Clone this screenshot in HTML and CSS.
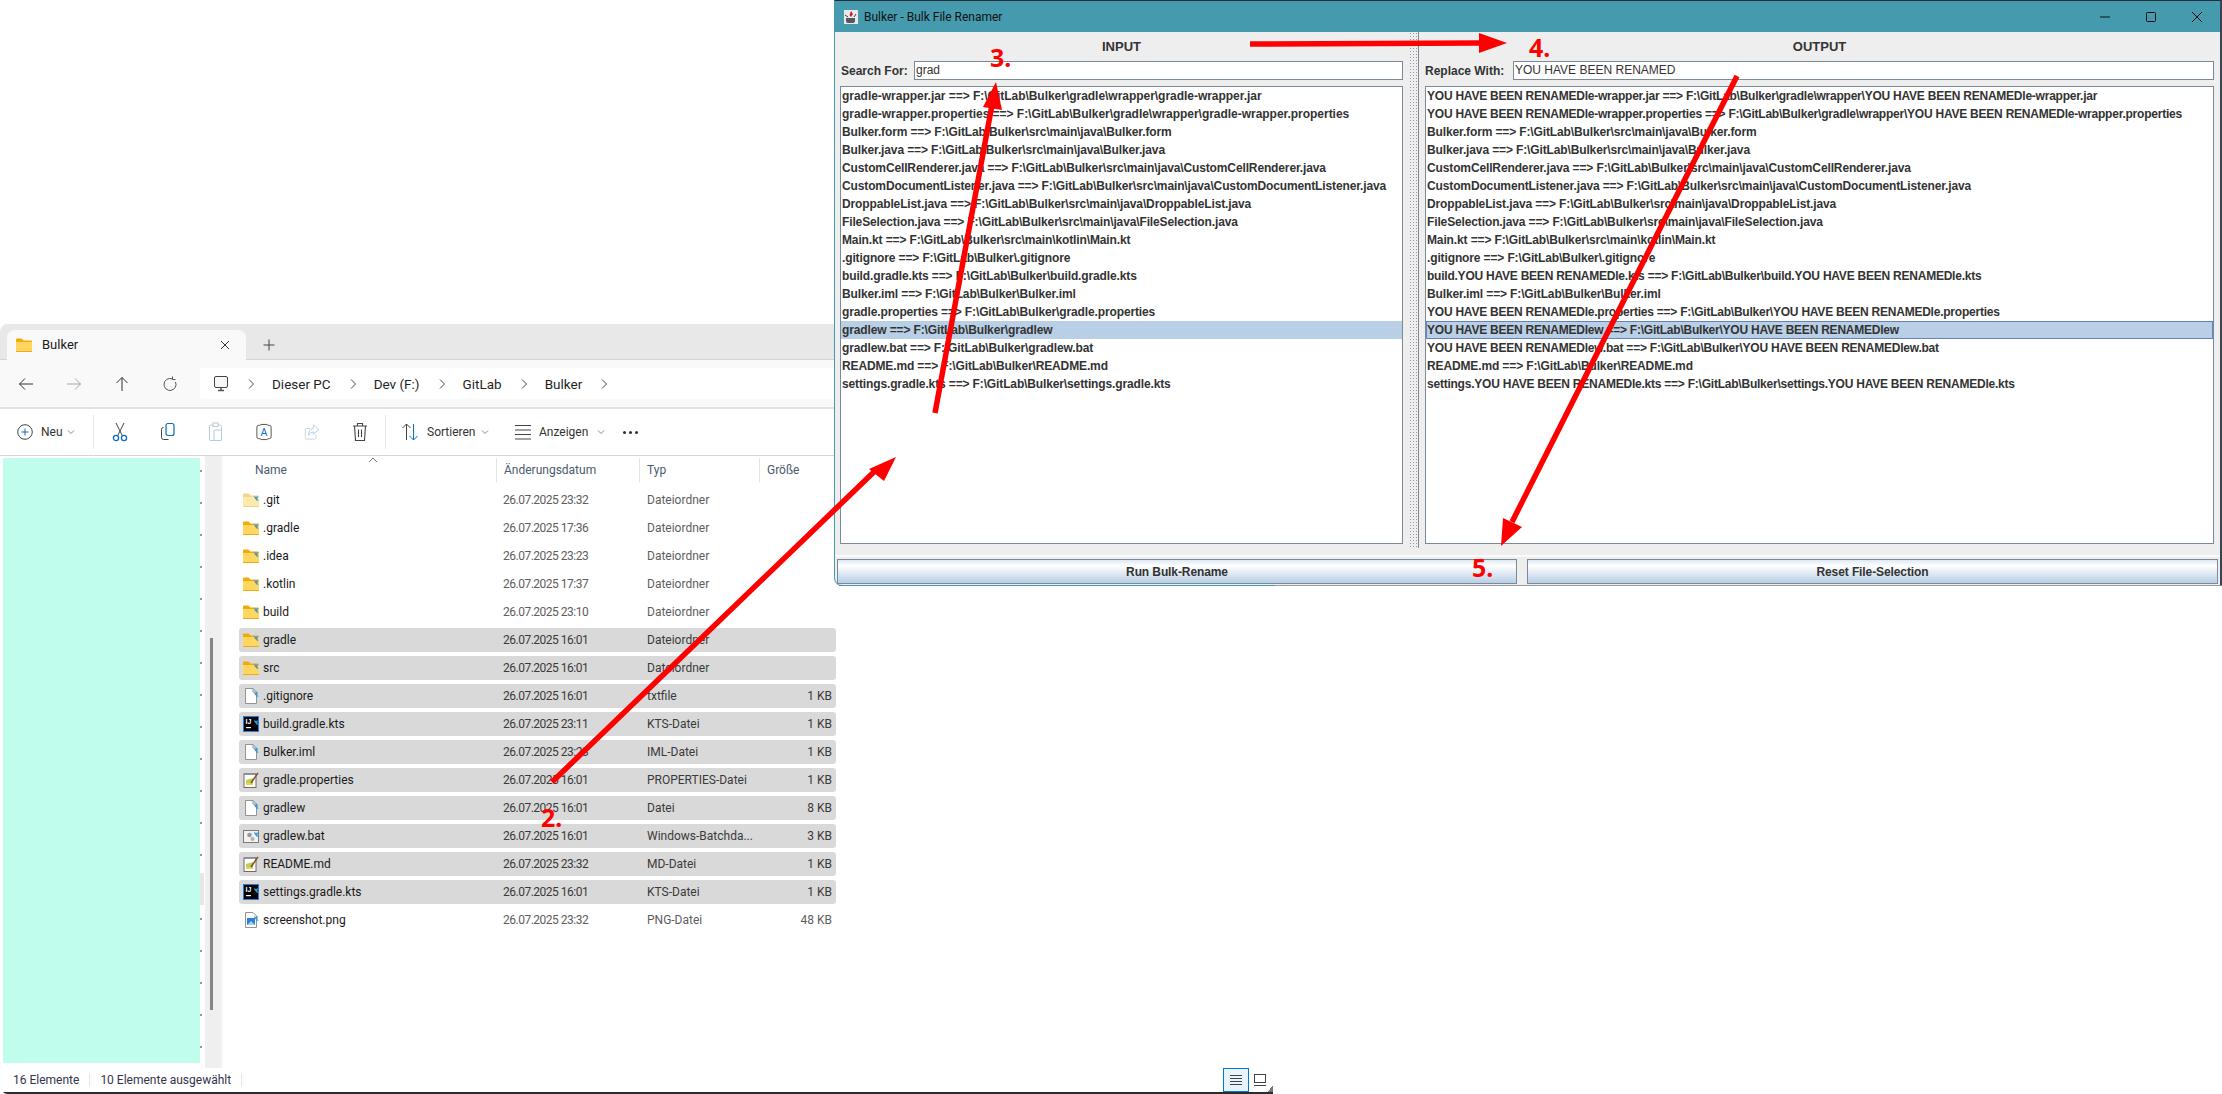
FILE: index.html
```html
<!DOCTYPE html>
<html lang="en">
<head>
    <meta charset="UTF-8">
    <title>Bulker</title>
    <link rel="stylesheet" href="styles.css">
</head>
<body>
    <svg class="defs" width="0" height="0">
        <symbol id="pin" viewBox="0 0 16 16"><path d="M11 .5l1.6 1.4L15 1.2 14.4 4l1.2 2-2-.6L11.500 3z" fill="#3a9ad9"/></symbol>
        <symbol id="folder" viewBox="0 0 16 16">
            <path d="M0 2.500Q0 1.500 1 1.500h4.500l2 2H15q1 0 1 1V6H0z" fill="#f2ac0a"/>
            <path d="M0 5h16v9q0 1-1 1H1q-1 0-1-1z" fill="#ffd75e"/>
            <path d="M0 14h16v.2q0 .8-1 .8H1q-1 0-1-.8z" fill="#eba91f"/>
        </symbol>
        <symbol id="page" viewBox="0 0 16 16"><path d="M2.500.5h7.500l3.500 3.500v11.500h-11z" fill="#fff" stroke="#8e9499"/><path d="M10 .5v3.500h3.500" fill="none" stroke="#8e9499"/></symbol>
        <symbol id="notes" viewBox="0 0 16 16">
            <rect x="1" y="2" width="12" height="13.500" fill="#fff" stroke="#6d6d6d"/>
            <path d="M2 1v2M4 1v2M6 1v2M8 1v2M10 1v2M12 1v2" stroke="#777"/>
            <path d="M3 8l7-2v7H3z" fill="#b6d455"/>
            <path d="M3 11h7v2H3z" fill="#f1d04a"/>
            <path d="M8 11L15 .8" stroke="#8a4a2a" stroke-width="1.500"/>
        </symbol>
        <symbol id="bat" viewBox="0 0 16 16">
            <rect x=".5" y="2.500" width="15" height="12" fill="#f2f2f2" stroke="#7c7c7c"/>
            <circle cx="6.500" cy="7" r="2.300" fill="#9a9a9a"/>
            <circle cx="9.500" cy="11" r="2" fill="#b2b2b2"/>
        </symbol>
        <symbol id="png" viewBox="0 0 16 16">
            <path d="M2.500.5h7.500l3.500 3.500v11.500h-11z" fill="#fff" stroke="#8e9499"/>
            <rect x="4" y="6" width="8" height="7" fill="#2d7fd4"/>
            <path d="M4 13l4-4 4 4z" fill="#9bd0f5"/>
        </symbol>
        <symbol id="chev-down" viewBox="0 0 8 8"><path d="M1 2.500l3 3 3-3" fill="none" stroke="#8a8a8a"/></symbol>
        <symbol id="crumb" viewBox="0 0 8 12"><path d="M2 1.500L6.500 6 2 10.500" fill="none" stroke="#444"/></symbol>
    </svg>

    <div class="explorer">
        <div class="tabstrip">
            <div class="tab">
                <svg class="ico"><use href="#folder"/></svg>
                <span class="tab-title">Bulker</span>
                <svg class="tab-x" viewBox="0 0 10 10"><path d="M1 1l8 8M9 1l-8 8" stroke="#333"/></svg>
            </div>
            <svg class="tab-plus" viewBox="0 0 12 12"><path d="M6 .5v11M.5 6h11" stroke="#444"/></svg>
        </div>

        <div class="navbar">
            <div class="nav-buttons">
                <svg viewBox="0 0 16 16"><path d="M15 8H1.500M7 2.500L1.500 8 7 13.500" fill="none" stroke="#333"/></svg>
                <svg viewBox="0 0 16 16"><path d="M1 8h13.500M9 2.500L14.500 8 9 13.500" fill="none" stroke="#a5a5a5"/></svg>
                <svg viewBox="0 0 16 16"><path d="M8 15V1.500M2.500 7L8 1.500 13.500 7" fill="none" stroke="#333"/></svg>
                <svg viewBox="0 0 16 16"><path d="M10 2.800A6 6 0 1 0 13.500 6M10.500 .5v3h3" fill="none" stroke="#555"/></svg>
            </div>
            <div class="addressbox">
                <svg class="pc" viewBox="0 0 16 16"><rect x="1.500" y=".5" width="13" height="11" rx="1.500" fill="#f4f8fb" stroke="#444"/><path d="M5 14.500h6M8 11.500v3" stroke="#555" stroke-width="1.500"/></svg>
                <svg class="crumb"><use href="#crumb"/></svg>
                <span class="crumb-text">Dieser PC</span>
                <svg class="crumb"><use href="#crumb"/></svg>
                <span class="crumb-text">Dev (F:)</span>
                <svg class="crumb"><use href="#crumb"/></svg>
                <span class="crumb-text">GitLab</span>
                <svg class="crumb"><use href="#crumb"/></svg>
                <span class="crumb-text">Bulker</span>
                <svg class="crumb"><use href="#crumb"/></svg>
            </div>
        </div>

        <div class="cmdbar">
            <div class="cmd cmd-new">
                <svg viewBox="0 0 16 16"><circle cx="8" cy="8" r="7.300" fill="none" stroke="#444"/><path d="M8 4.500v7M4.500 8h7" stroke="#0a6cbd"/></svg>
                <span>Neu</span>
                <svg class="cmd-chev"><use href="#chev-down"/></svg>
            </div>
            <div class="cmd-sep"></div>
            <div class="cmd-icons">
                <svg viewBox="0 0 16 20"><path d="M4 1l6.500 13M12 1L5.500 14" stroke="#444" fill="none"/><circle cx="4" cy="16" r="2.600" fill="none" stroke="#0a6cbd" stroke-width="1.300"/><circle cx="12" cy="16" r="2.600" fill="none" stroke="#0a6cbd" stroke-width="1.300"/></svg>
                <svg viewBox="0 0 16 20"><rect x="6" y="1.500" width="8" height="12" rx="2" fill="none" stroke="#0a6cbd" stroke-width="1.200"/><path d="M3.500 5.500Q1.500 5.500 1.500 7.500v8q0 2 2 2h5" fill="none" stroke="#444"/></svg>
                <svg viewBox="0 0 16 20"><rect x="1.500" y="3" width="12" height="15.500" rx="1.500" fill="none" stroke="#c2c8cc"/><rect x="5" y="1" width="5" height="3.500" fill="#fff" stroke="#c2c8cc"/><rect x="6" y="8" width="7.500" height="10.500" rx="1" fill="#fff" stroke="#a9cdea"/></svg>
                <svg viewBox="0 0 18 20"><path d="M5 2.500H3Q1 2.500 1 4.500v11q0 2 2 2h2M13 2.500h2q2 0 2 2v11q0 2-2 2h-2" fill="none" stroke="#444"/><text x="9" y="15" class="rename-a">A</text><path d="M5 1.500h8M5 18.500h8" stroke="#444"/></svg>
                <svg viewBox="0 0 18 20"><path d="M7 6H3q-1.500 0-1.500 1.500v9Q1.500 18 3 18h9q1.500 0 1.500-1.500V13" fill="none" stroke="#c9ced1"/><path d="M10.500 2L16.500 7.500 10.500 12.500V10Q6.500 10 5 14q0-7 5.500-8z" fill="none" stroke="#a9cdea"/></svg>
                <svg viewBox="0 0 16 20"><path d="M1 4h14M5.500 4V1.500h5V4M2.500 4l1 14.500h9L13.500 4M6.500 7.500v7.500M9.500 7.500v7.500" fill="none" stroke="#444" stroke-width="1.100"/></svg>
            </div>
            <div class="cmd-sep"></div>
            <div class="cmd cmd-sort">
                <svg viewBox="0 0 18 20"><path d="M5.500 18V2M1.500 6l4-4 4 4" fill="none" stroke="#444"/><path d="M12.500 2v16M8.500 14l4 4 4-4" fill="none" stroke="#0a6cbd"/></svg>
                <span>Sortieren</span>
                <svg class="cmd-chev"><use href="#chev-down"/></svg>
            </div>
            <div class="cmd cmd-view">
                <svg viewBox="0 0 16 16"><path d="M0 1.500h16M0 6h16M0 10.500h16M0 15h16" stroke="#444"/></svg>
                <span>Anzeigen</span>
                <svg class="cmd-chev"><use href="#chev-down"/></svg>
            </div>
            <div class="cmd-more"><i></i><i></i><i></i></div>
        </div>

        <div class="exp-body">
            <div class="sidebar">
                <div class="censor"></div>
                <div class="nav-peek"></div>
            </div>
            <div class="side-scroll"><div class="side-thumb"></div></div>
            <div class="filepane">
                <div class="colheads">
                    <span class="col-name">Name</span>
                    <span>Änderungsdatum</span>
                    <span>Typ</span>
                    <span>Größe</span>
                    <svg class="sort-caret" viewBox="0 0 10 6"><path d="M1 5l4-4 4 4" fill="none" stroke="#777"/></svg>
                </div>
                <div class="filerows">
                    <div class="frow"><div class="fname"><svg class="ico faded"><use href="#folder"/></svg><svg class="ico pin"><use href="#pin"/></svg>.git</div><span class="fcell fdate">26.07.2025 23:32</span><span class="fcell">Dateiordner</span><span class="fsize"></span></div>
                    <div class="frow"><div class="fname"><svg class="ico"><use href="#folder"/></svg><svg class="ico pin"><use href="#pin"/></svg>.gradle</div><span class="fcell fdate">26.07.2025 17:36</span><span class="fcell">Dateiordner</span><span class="fsize"></span></div>
                    <div class="frow"><div class="fname"><svg class="ico"><use href="#folder"/></svg><svg class="ico pin"><use href="#pin"/></svg>.idea</div><span class="fcell fdate">26.07.2025 23:23</span><span class="fcell">Dateiordner</span><span class="fsize"></span></div>
                    <div class="frow"><div class="fname"><svg class="ico"><use href="#folder"/></svg><svg class="ico pin"><use href="#pin"/></svg>.kotlin</div><span class="fcell fdate">26.07.2025 17:37</span><span class="fcell">Dateiordner</span><span class="fsize"></span></div>
                    <div class="frow"><div class="fname"><svg class="ico"><use href="#folder"/></svg><svg class="ico pin"><use href="#pin"/></svg>build</div><span class="fcell fdate">26.07.2025 23:10</span><span class="fcell">Dateiordner</span><span class="fsize"></span></div>
                    <div class="frow sel"><div class="fname"><svg class="ico"><use href="#folder"/></svg><svg class="ico pin"><use href="#pin"/></svg>gradle</div><span class="fcell fdate">26.07.2025 16:01</span><span class="fcell">Dateiordner</span><span class="fsize"></span></div>
                    <div class="frow sel"><div class="fname"><svg class="ico"><use href="#folder"/></svg><svg class="ico pin"><use href="#pin"/></svg>src</div><span class="fcell fdate">26.07.2025 16:01</span><span class="fcell">Dateiordner</span><span class="fsize"></span></div>
                    <div class="frow sel"><div class="fname"><svg class="ico"><use href="#page"/></svg><svg class="ico pin"><use href="#pin"/></svg>.gitignore</div><span class="fcell fdate">26.07.2025 16:01</span><span class="fcell">txtfile</span><span class="fsize">1 KB</span></div>
                    <div class="frow sel"><div class="fname"><svg class="ico" viewBox="0 0 16 16"><rect x=".5" y=".5" width="15" height="15" fill="#000" stroke="#1f7fe0"/><text x="2.500" y="8" class="ij-text">IJ</text><rect x="3" y="11" width="5" height="1.200" fill="#fff"/></svg><svg class="ico pin"><use href="#pin"/></svg>build.gradle.kts</div><span class="fcell fdate">26.07.2025 23:11</span><span class="fcell">KTS-Datei</span><span class="fsize">1 KB</span></div>
                    <div class="frow sel"><div class="fname"><svg class="ico"><use href="#page"/></svg><svg class="ico pin"><use href="#pin"/></svg>Bulker.iml</div><span class="fcell fdate">26.07.2025 23:23</span><span class="fcell">IML-Datei</span><span class="fsize">1 KB</span></div>
                    <div class="frow sel"><div class="fname"><svg class="ico"><use href="#notes"/></svg>gradle.properties</div><span class="fcell fdate">26.07.2025 16:01</span><span class="fcell">PROPERTIES-Datei</span><span class="fsize">1 KB</span></div>
                    <div class="frow sel"><div class="fname"><svg class="ico"><use href="#page"/></svg><svg class="ico pin"><use href="#pin"/></svg>gradlew</div><span class="fcell fdate">26.07.2025 16:01</span><span class="fcell">Datei</span><span class="fsize">8 KB</span></div>
                    <div class="frow sel"><div class="fname"><svg class="ico"><use href="#bat"/></svg><svg class="ico pin"><use href="#pin"/></svg>gradlew.bat</div><span class="fcell fdate">26.07.2025 16:01</span><span class="fcell">Windows-Batchda...</span><span class="fsize">3 KB</span></div>
                    <div class="frow sel"><div class="fname"><svg class="ico"><use href="#notes"/></svg>README.md</div><span class="fcell fdate">26.07.2025 23:32</span><span class="fcell">MD-Datei</span><span class="fsize">1 KB</span></div>
                    <div class="frow sel"><div class="fname"><svg class="ico" viewBox="0 0 16 16"><rect x=".5" y=".5" width="15" height="15" fill="#000" stroke="#1f7fe0"/><text x="2.500" y="8" class="ij-text">IJ</text><rect x="3" y="11" width="5" height="1.200" fill="#fff"/></svg><svg class="ico pin"><use href="#pin"/></svg>settings.gradle.kts</div><span class="fcell fdate">26.07.2025 16:01</span><span class="fcell">KTS-Datei</span><span class="fsize">1 KB</span></div>
                    <div class="frow"><div class="fname"><svg class="ico"><use href="#png"/></svg><svg class="ico pin"><use href="#pin"/></svg>screenshot.png</div><span class="fcell fdate">26.07.2025 23:32</span><span class="fcell">PNG-Datei</span><span class="fsize">48 KB</span></div>
                </div>
            </div>
        </div>

        <div class="statusbar">
            <span class="stat">16 Elemente</span>
            <span class="stat">10 Elemente ausgewählt</span>
            <div class="viewswitch">
                <div class="view-btn active"><svg viewBox="0 0 12 10"><path d="M0 .5h12M0 3.500h12M0 6.500h12M0 9.500h12" stroke="#444"/></svg></div>
                <div class="view-btn"><svg viewBox="0 0 12 12"><rect x=".5" y=".5" width="11" height="8" fill="none" stroke="#444"/><path d="M0 11.500h12" stroke="#444"/></svg></div>
            </div>
        </div>
    </div>

    <div class="javawin">
        <div class="titlebar">
            <svg class="java-ico" viewBox="0 0 16 16">
                <rect x="1" y="1" width="14" height="14" fill="#e9e9e9"/>
                <path d="M8 2l2 3-2 3-1.500-2z" fill="#c8242b"/>
                <path d="M3 9h9v3q0 2-2 2H5q-2 0-2-2zM1 14.500h13" fill="#55585c"/>
                <path d="M2 6l3 2M13 5l-2 3" stroke="#33414d"/>
            </svg>
            <span class="title-text">Bulker - Bulk File Renamer</span>
            <div class="wincontrols">
                <svg viewBox="0 0 12 12"><path d="M1 6h10" stroke="#111"/></svg>
                <svg viewBox="0 0 12 12"><rect x="1.500" y="1.500" width="9" height="9" rx="1" fill="none" stroke="#111"/></svg>
                <svg viewBox="0 0 12 12"><path d="M1 1l10 10M11 1L1 11" stroke="#111"/></svg>
            </div>
        </div>

        <div class="splitpane">
            <div class="pane pane-left">
                <h2 class="pane-title">INPUT</h2>
                <div class="field-row">
                    <label class="field-label label-search">Search For:</label>
                    <div class="field">grad</div>
                </div>
                <ul class="listbox">
                    <li class="loose">gradle-wrapper.jar ==&gt; F:\GitLab\Bulker\gradle\wrapper\gradle-wrapper.jar</li>
                    <li class="loose">gradle-wrapper.properties ==&gt; F:\GitLab\Bulker\gradle\wrapper\gradle-wrapper.properties</li>
                    <li>Bulker.form ==&gt; F:\GitLab\Bulker\src\main\java\Bulker.form</li>
                    <li>Bulker.java ==&gt; F:\GitLab\Bulker\src\main\java\Bulker.java</li>
                    <li>CustomCellRenderer.java ==&gt; F:\GitLab\Bulker\src\main\java\CustomCellRenderer.java</li>
                    <li>CustomDocumentListener.java ==&gt; F:\GitLab\Bulker\src\main\java\CustomDocumentListener.java</li>
                    <li>DroppableList.java ==&gt; F:\GitLab\Bulker\src\main\java\DroppableList.java</li>
                    <li>FileSelection.java ==&gt; F:\GitLab\Bulker\src\main\java\FileSelection.java</li>
                    <li>Main.kt ==&gt; F:\GitLab\Bulker\src\main\kotlin\Main.kt</li>
                    <li>.gitignore ==&gt; F:\GitLab\Bulker\.gitignore</li>
                    <li>build.gradle.kts ==&gt; F:\GitLab\Bulker\build.gradle.kts</li>
                    <li>Bulker.iml ==&gt; F:\GitLab\Bulker\Bulker.iml</li>
                    <li>gradle.properties ==&gt; F:\GitLab\Bulker\gradle.properties</li>
                    <li class="picked">gradlew ==&gt; F:\GitLab\Bulker\gradlew</li>
                    <li>gradlew.bat ==&gt; F:\GitLab\Bulker\gradlew.bat</li>
                    <li>README.md ==&gt; F:\GitLab\Bulker\README.md</li>
                    <li>settings.gradle.kts ==&gt; F:\GitLab\Bulker\settings.gradle.kts</li>
                </ul>
            </div>
            <div class="divider"></div>
            <div class="pane pane-right">
                <h2 class="pane-title">OUTPUT</h2>
                <div class="field-row">
                    <label class="field-label label-replace">Replace With:</label>
                    <div class="field">YOU HAVE BEEN RENAMED</div>
                </div>
                <ul class="listbox">
                    <li class="caps">YOU HAVE BEEN RENAMEDle-wrapper.jar ==&gt; F:\GitLab\Bulker\gradle\wrapper\YOU HAVE BEEN RENAMEDle-wrapper.jar</li>
                    <li class="caps">YOU HAVE BEEN RENAMEDle-wrapper.properties ==&gt; F:\GitLab\Bulker\gradle\wrapper\YOU HAVE BEEN RENAMEDle-wrapper.properties</li>
                    <li>Bulker.form ==&gt; F:\GitLab\Bulker\src\main\java\Bulker.form</li>
                    <li>Bulker.java ==&gt; F:\GitLab\Bulker\src\main\java\Bulker.java</li>
                    <li>CustomCellRenderer.java ==&gt; F:\GitLab\Bulker\src\main\java\CustomCellRenderer.java</li>
                    <li>CustomDocumentListener.java ==&gt; F:\GitLab\Bulker\src\main\java\CustomDocumentListener.java</li>
                    <li>DroppableList.java ==&gt; F:\GitLab\Bulker\src\main\java\DroppableList.java</li>
                    <li>FileSelection.java ==&gt; F:\GitLab\Bulker\src\main\java\FileSelection.java</li>
                    <li>Main.kt ==&gt; F:\GitLab\Bulker\src\main\kotlin\Main.kt</li>
                    <li>.gitignore ==&gt; F:\GitLab\Bulker\.gitignore</li>
                    <li class="caps">build.YOU HAVE BEEN RENAMEDle.kts ==&gt; F:\GitLab\Bulker\build.YOU HAVE BEEN RENAMEDle.kts</li>
                    <li>Bulker.iml ==&gt; F:\GitLab\Bulker\Bulker.iml</li>
                    <li class="caps">YOU HAVE BEEN RENAMEDle.properties ==&gt; F:\GitLab\Bulker\YOU HAVE BEEN RENAMEDle.properties</li>
                    <li class="caps picked focused">YOU HAVE BEEN RENAMEDlew ==&gt; F:\GitLab\Bulker\YOU HAVE BEEN RENAMEDlew</li>
                    <li class="caps">YOU HAVE BEEN RENAMEDlew.bat ==&gt; F:\GitLab\Bulker\YOU HAVE BEEN RENAMEDlew.bat</li>
                    <li>README.md ==&gt; F:\GitLab\Bulker\README.md</li>
                    <li class="caps">settings.YOU HAVE BEEN RENAMEDle.kts ==&gt; F:\GitLab\Bulker\settings.YOU HAVE BEEN RENAMEDle.kts</li>
                </ul>
            </div>
        </div>

        <div class="buttonbar">
            <button class="jbtn">Run Bulk-Rename</button>
            <button class="jbtn">Reset File-Selection</button>
        </div>
    </div>

    <!-- red annotations drawn on top of the screenshot -->
    <svg class="arrows" viewBox="0 0 2222 1094">
        <g stroke="#ff0000" stroke-width="5.500" fill="#ff0000">
            <line x1="552" y1="782" x2="878" y2="468"/>
            <line x1="935" y1="413" x2="992" y2="105"/>
            <line x1="1250" y1="44" x2="1480" y2="43"/>
            <line x1="1737" y1="76" x2="1512" y2="522"/>
        </g>
        <g fill="#ff0000">
            <polygon points="896,457 869,469 884,481"/>
            <polygon points="996,82 983,107 1002,110"/>
            <polygon points="1507,43 1479,33 1479,53"/>
            <polygon points="1501,546 1503,518 1522,527"/>
        </g>
    </svg>
    <span class="mark mark-2">2.</span>
    <span class="mark mark-3">3.</span>
    <span class="mark mark-4">4.</span>
    <span class="mark mark-5">5.</span>
</body>
</html>
```

FILE: styles.css
```css
body {
    margin: 0;
    width: 2222px;
    height: 1094px;
    position: relative;
    overflow: hidden;
    background-color: #fff;
    font-family: Roboto, sans-serif;
}

.defs {
    position: absolute;
}

.ij-text {
    font-family: "Liberation Sans", sans-serif;
    font-size: 7px;
    font-weight: 700;
    fill: #fff;
}

.rename-a {
    font-family: Roboto, sans-serif;
    font-size: 12px;
    fill: #0a6cbd;
    text-anchor: middle;
}

/* explorer window */
.explorer {
    position: absolute;
    left: 0;
    top: 324px;
    width: 1273px;
    height: 770px;
    display: flex;
    flex-direction: column;
    background-color: #fff;
    border-radius: 8px 0 0 8px;
    overflow: hidden;
    font-size: 12px;
    color: #1a1a1a;
}

.tabstrip {
    height: 36px;
    flex: none;
    box-sizing: border-box;
    padding: 6px 0 0 7px;
    display: flex;
    background-color: #e8e8e8;
    border-bottom: 1px solid #d4d4d4;
}

.tab {
    width: 239px;
    height: 31px;
    box-sizing: border-box;
    padding: 0 16px 2px 9px;
    display: flex;
    align-items: center;
    background-color: #f9f9f9;
    border-radius: 8px 8px 0 0;
    font-size: 13px;
}

.ico {
    width: 16px;
    height: 16px;
    flex: none;
}

.tab-title {
    margin-left: 10px;
    flex: 1;
}

.tab-x {
    width: 10px;
    height: 10px;
}

.tab-plus {
    width: 12px;
    height: 12px;
    margin: 9px 0 0 17px;
}

.navbar {
    height: 49px;
    flex: none;
    box-sizing: border-box;
    padding: 8px 0 8px 18px;
    display: flex;
    background-color: #f9f9f9;
    border-bottom: 2px solid #e2e2e2;
}

.nav-buttons {
    width: 182px;
    flex: none;
    display: flex;
    align-items: center;
    gap: 32px;
}

.nav-buttons svg {
    width: 16px;
    height: 16px;
}

.addressbox {
    flex: 1;
    display: flex;
    align-items: center;
    padding-left: 13px;
    background-color: #fff;
    border-radius: 4px 0 0 4px;
    font-size: 13.500px;
    color: #1f1f1f;
}

.pc {
    width: 16px;
    height: 16px;
}

.crumb {
    width: 8px;
    height: 12px;
    margin: 0 17px 0 18px;
}

.cmdbar {
    height: 47px;
    flex: none;
    box-sizing: border-box;
    padding-left: 17px;
    display: flex;
    align-items: center;
    border-bottom: 1px solid #d6d6d6;
}

.cmd {
    display: flex;
    align-items: center;
    color: #333;
}

.cmd svg {
    flex: none;
}

.cmd-chev {
    width: 8px;
    height: 8px;
    margin-left: 4px;
}

.cmd-new svg:first-child {
    width: 16px;
    height: 16px;
    margin-right: 8px;
}

.cmd-new {
    width: 76px;
}

.cmd-sep {
    width: 1px;
    height: 34px;
    background-color: #e8e8e8;
}

.cmd-icons {
    width: 291px;
    box-sizing: border-box;
    padding-left: 18px;
    display: flex;
    align-items: center;
    gap: 32px;
}

.cmd-icons svg {
    width: 16px;
    height: 20px;
}

.cmd-sort {
    width: 114px;
    margin-left: 15px;
    gap: 8px;
}

.cmd-sort svg:first-child {
    width: 18px;
    height: 20px;
}

.cmd-sort .cmd-chev {
    margin-left: -2px;
}

.cmd-view .cmd-chev {
    margin-left: 1px;
}

.cmd-view {
    width: 100px;
    gap: 8px;
}

.cmd-view svg:first-child {
    width: 16px;
    height: 16px;
}

.cmd-more {
    margin-left: 8px;
    display: flex;
    gap: 3px;
}

.cmd-more i {
    width: 3px;
    height: 3px;
    border-radius: 50%;
    background-color: #333;
}

.exp-body {
    flex: 1;
    min-height: 0;
    display: flex;
}

.sidebar {
    width: 205px;
    flex: none;
    box-sizing: border-box;
    padding: 2px 5px 5px 3px;
    display: flex;
    position: relative;
    /* bits of the chevrons that stick out past the painted block */
    background-image: repeating-linear-gradient(to bottom, #fff 0 14px, #9a9a9a 14px 16px, #fff 16px 32px);
    background-size: 2px 100%;
    background-position: 200px 0;
    background-repeat: no-repeat;
}

.censor {
    flex: 1;
    background-color: #c1fdec;
}

.nav-peek {
    position: absolute;
    left: 200px;
    top: 417px;
    width: 4px;
    height: 32px;
    background-color: #e6e6e6;
}

.side-scroll {
    width: 16px;
    flex: none;
    background-color: #efefef;
    padding-top: 182px;
    box-sizing: border-box;
}

.side-thumb {
    width: 3px;
    height: 372px;
    margin-left: 5px;
    background-color: #858585;
}

.filepane {
    flex: 1;
    padding: 2px 0 0 16px;
    border-left: 2px solid #f5f5f5;
}

.colheads {
    width: 597px;
    height: 24px;
    display: grid;
    grid-template-columns: 258px 143px 120px 76px;
    position: relative;
    color: #4c5a6e;
}

.colheads span {
    display: flex;
    align-items: center;
    padding-left: 7px;
    border-right: 1px solid #e5e5e5;
    box-sizing: border-box;
}

.colheads span:last-of-type {
    border-right: none;
}

.colheads .col-name {
    padding-left: 16px;
}

.sort-caret {
    position: absolute;
    left: 129px;
    top: -1px;
    width: 10px;
    height: 6px;
}

.filerows {
    margin-top: 6px;
    width: 597px;
    display: flex;
    flex-direction: column;
    gap: 4px;
}

.frow {
    height: 24px;
    display: grid;
    grid-template-columns: 258px 144px 120px 75px;
    align-items: center;
    border-radius: 3px;
    color: #5e5e5e;
}

.frow.sel {
    background-color: #d9d9d9;
    color: #3a3a3a;
}

.fname {
    padding-left: 4px;
    display: flex;
    align-items: center;
    color: #1a1a1a;
    position: relative;
}

.fname .ico:first-child {
    margin-right: 4px;
}

.pin {
    position: absolute;
    left: 4px;
    top: 3px;
}

.faded {
    opacity: 0.5;
}

.fcell {
    padding-left: 6px;
    white-space: nowrap;
}

.fdate {
    letter-spacing: -0.5px;
}

.fsize {
    padding-right: 4px;
    text-align: right;
}

.statusbar {
    height: 24px;
    flex: none;
    display: flex;
    align-items: center;
    padding-left: 13px;
    color: #33334d;
    border-bottom: 2px solid #2b2b2b;
    background: linear-gradient(135deg, transparent 50%, #777 50%) no-repeat right bottom / 6px 6px;
}

.stat {
    padding-right: 10px;
    margin-right: 10px;
    border-right: 1px solid #e8e8e8;
    line-height: 14px;
}

.viewswitch {
    margin-left: auto;
    margin-right: 1px;
    display: flex;
    height: 100%;
    width: 49px;
}

.view-btn {
    flex: 1;
    box-sizing: border-box;
    display: flex;
    align-items: center;
    justify-content: center;
}

.view-btn svg {
    width: 12px;
    height: 12px;
}

.view-btn.active {
    background-color: #e8f3fb;
    border: 1px solid #0078d4;
}

/* swing window */
.javawin {
    position: absolute;
    left: 834px;
    top: 0;
    width: 1388px;
    height: 586px;
    box-sizing: border-box;
    display: flex;
    flex-direction: column;
    background-color: #eee;
    border-top: 1px solid #26303a;
    border-left: 1px solid #459aae;
    border-right: 2px solid #36454f;
    border-bottom: 1px solid #9a9a9a;
    border-radius: 0 0 0 8px;
    font-family: "Liberation Sans", sans-serif;
    font-size: 12px;
    font-weight: 700;
    color: #333;
}

.javawin::after {
    content: "";
    position: absolute;
    left: 4px;
    bottom: -1px;
    width: 436px;
    height: 1px;
    background-color: #459aae;
}

.titlebar {
    height: 31px;
    flex: none;
    display: flex;
    align-items: center;
    padding-left: 8px;
    background-color: #469aae;
    font-family: Roboto, sans-serif;
    font-weight: 400;
    color: #111;
}

.java-ico {
    width: 16px;
    height: 16px;
}

.title-text {
    margin-left: 5px;
}

.wincontrols {
    margin-left: auto;
    margin-right: 17px;
    display: flex;
    gap: 34px;
}

.wincontrols svg {
    width: 12px;
    height: 12px;
}

.splitpane {
    height: 519px;
    flex: none;
    display: grid;
    grid-template-columns: 575px 9px 1fr;
}

.pane {
    display: flex;
    flex-direction: column;
    min-width: 0;
    padding-bottom: 7px;
}

.pane-left {
    padding-left: 5px;
    padding-right: 7px;
}

.pane-right {
    padding-left: 6px;
    padding-right: 6px;
}

.pane-title {
    margin: 0;
    height: 29px;
    flex: none;
    font-size: 13px;
    line-height: 30px;
    text-align: center;
}

.field-row {
    height: 19px;
    flex: none;
    display: flex;
    align-items: center;
}

.field-label {
    flex: none;
}

.label-search {
    width: 74px;
    padding-left: 1px;
    box-sizing: border-box;
}

.label-replace {
    width: 88px;
}

.field {
    flex: 1;
    height: 19px;
    box-sizing: border-box;
    padding: 0 1px;
    line-height: 17px;
    background-color: #fff;
    border: 1px solid #7a8a99;
    font-weight: 400;
}

.listbox {
    flex: 1;
    margin: 6px 0 0;
    padding: 0;
    list-style: none;
    background-color: #fff;
    border: 1px solid #7a8a99;
    overflow: hidden;
}

.listbox li {
    height: 18px;
    line-height: 18px;
    padding-left: 1px;
    white-space: nowrap;
    box-sizing: border-box;
    letter-spacing: -0.13px;
}

.listbox li.loose {
    letter-spacing: -0.03px;
}

.listbox li.caps {
    letter-spacing: -0.23px;
}

.listbox li.picked {
    background-color: #b8cfe5;
}

.listbox li.focused {
    border: 1px solid #6382bf;
    padding-left: 0;
    line-height: 16px;
}

.divider {
    border-right: 1px solid #7a8a99;
    margin-bottom: 3px;
    background-image: radial-gradient(#9c9c9c 0.6px, transparent 0.8px);
    background-size: 3px 3px;
    background-position: 2px 0;
}

.buttonbar {
    flex: 1;
    box-sizing: border-box;
    padding: 2px 2px 1px 2px;
    display: grid;
    grid-template-columns: 680px 691px;
    gap: 10px;
    border-top: 2px solid #fafafa;
    margin-top: 4px;
}

.jbtn {
    padding: 0;
    border: 1px solid #7a8a99;
    background: linear-gradient(to bottom, #dde8f3 0, #fff 25%, #b8cfe5 100%);
    font: inherit;
    letter-spacing: -0.1px;
    color: #333;
}

/* annotations */
.arrows {
    position: absolute;
    left: 0;
    top: 0;
    width: 2222px;
    height: 1094px;
    pointer-events: none;
}

.mark {
    position: absolute;
    font-family: "Noto Sans", sans-serif;
    font-size: 25px;
    font-weight: 700;
    line-height: 25px;
    color: #f00;
}

.mark-2 { left: 541px; top: 805px; }
.mark-3 { left: 990px; top: 45px; }
.mark-4 { left: 1529px; top: 35px; }
.mark-5 { left: 1472px; top: 555px; }
```
